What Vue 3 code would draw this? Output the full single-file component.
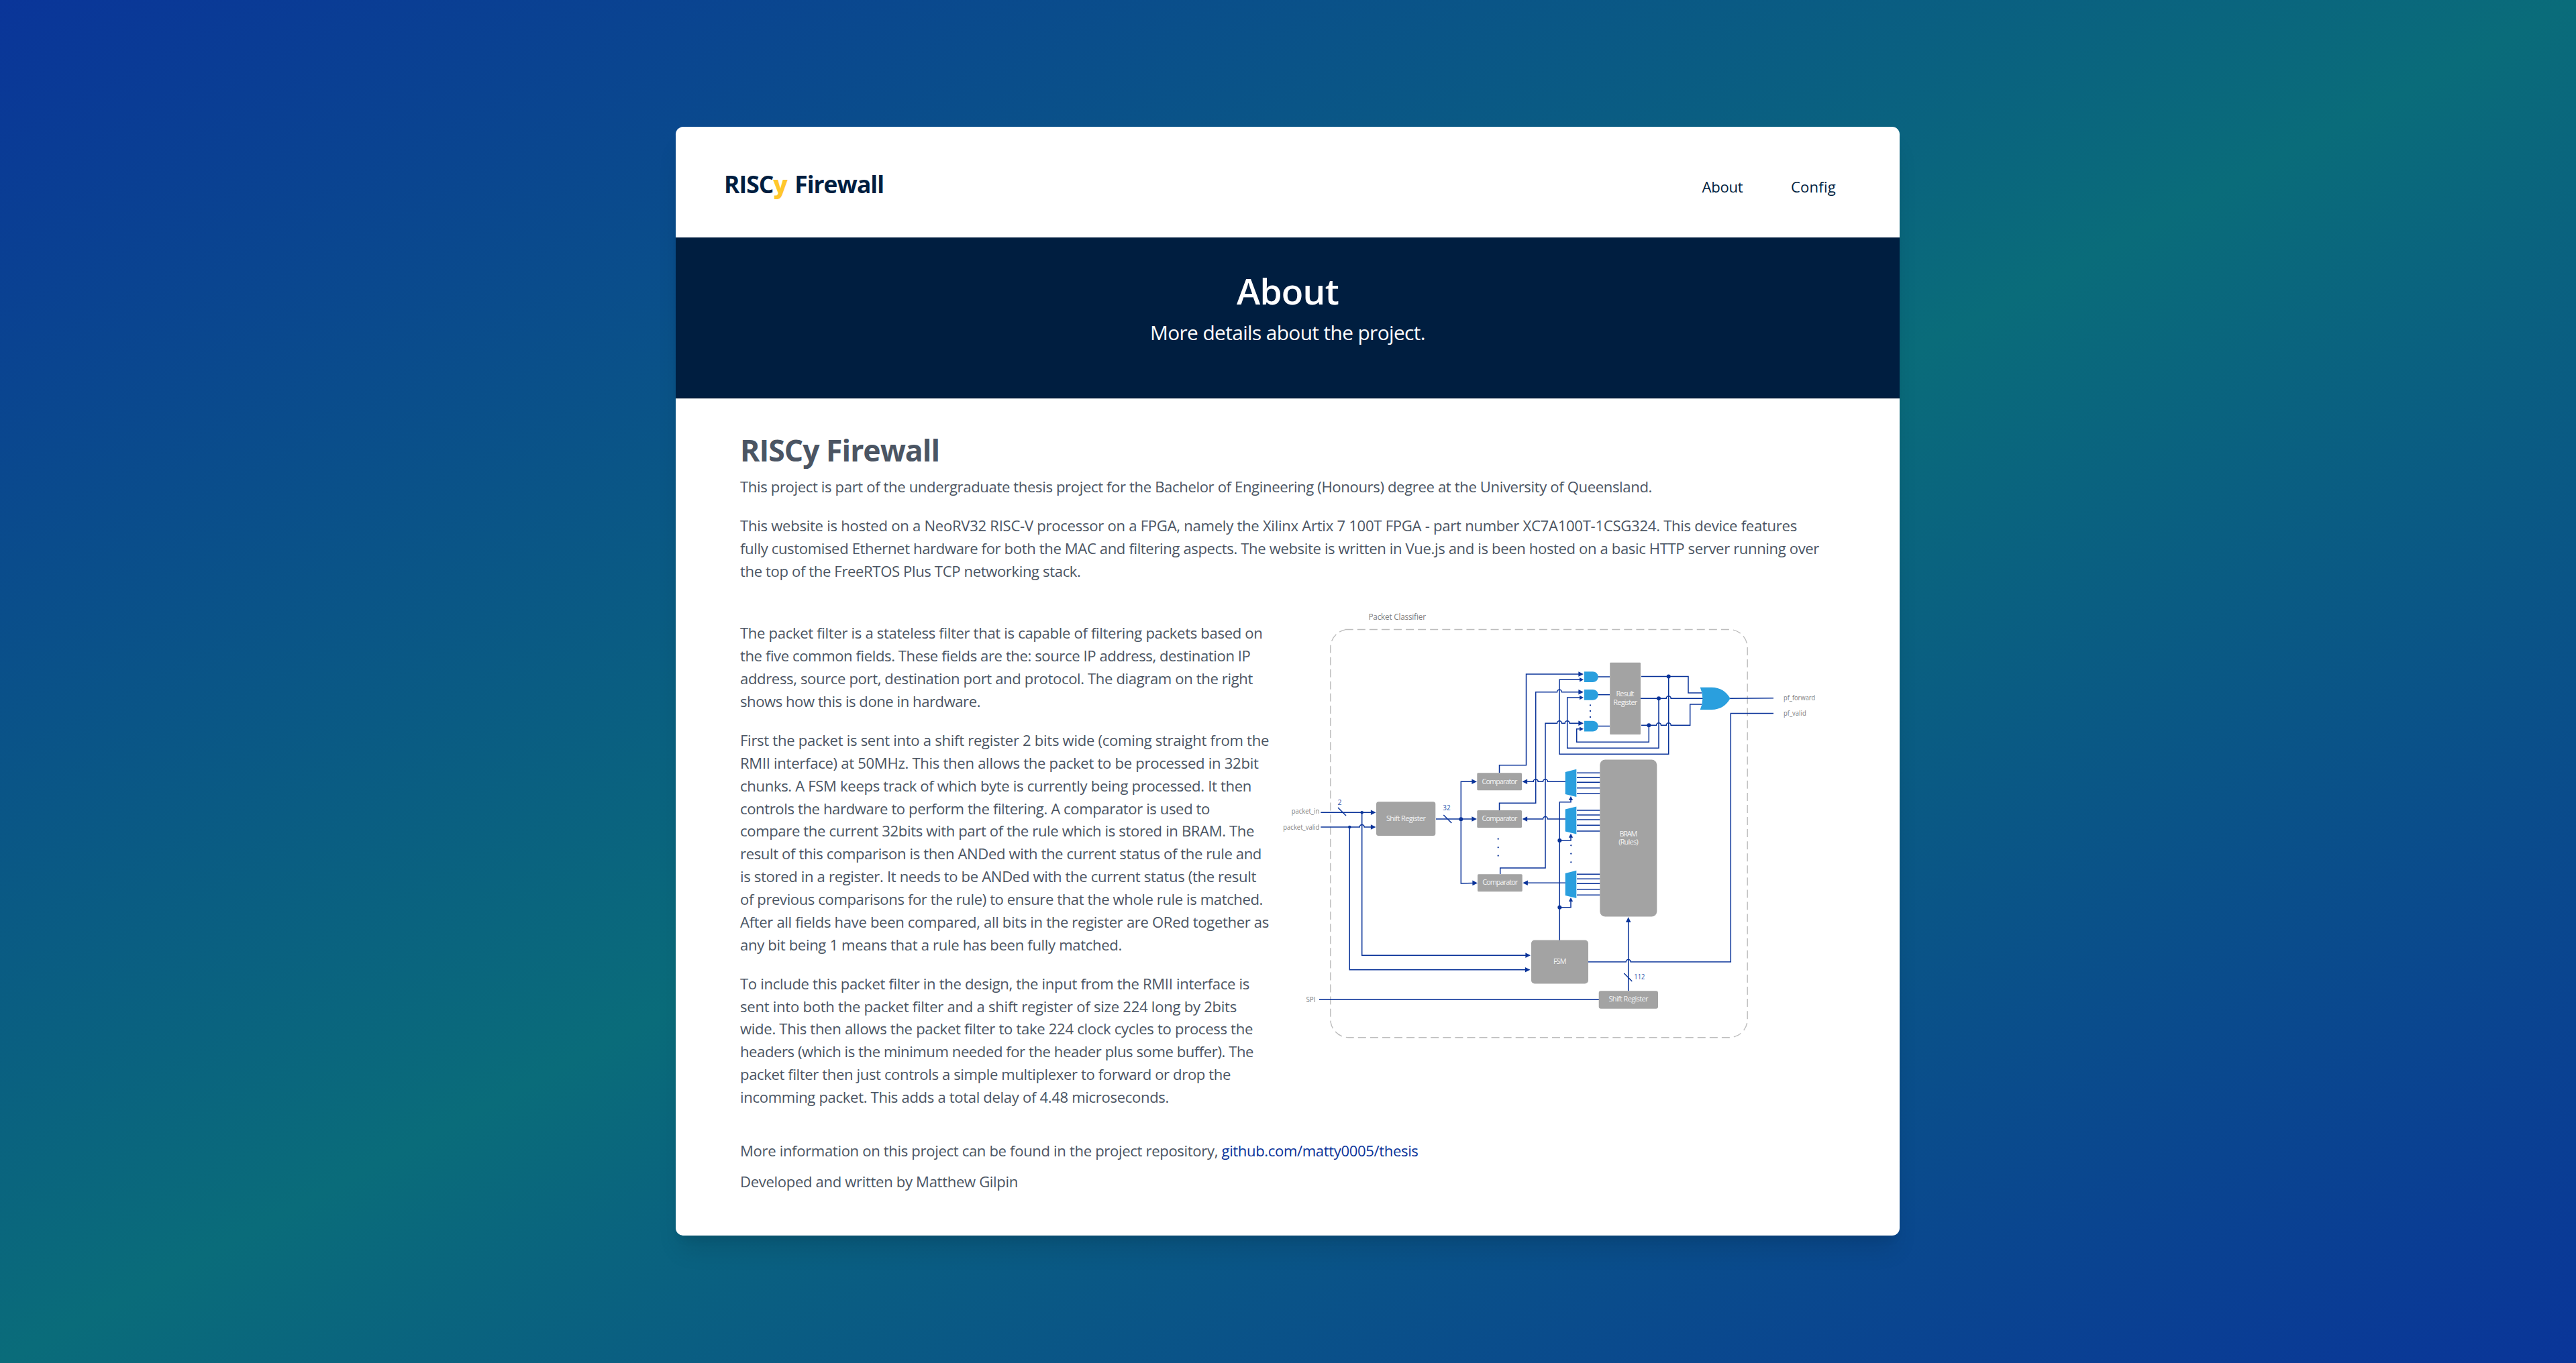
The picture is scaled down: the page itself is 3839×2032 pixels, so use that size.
<script setup>
// Spreads the letters of a line so that it fills the given measure.
const vFit = {
  mounted(el, { value }) {
    const natural = el.getBoundingClientRect().width
    el.style.letterSpacing = `${(value - natural) / el.textContent.length}px`
  },
}

const intro = [
  [['This project is part of the undergraduate thesis project for the Bachelor of Engineering (Honours) degree at the University of Queensland.', 1359]],
  [
    ['This website is hosted on a NeoRV32 RISC-V processor on a FPGA, namely the Xilinx Artix 7 100T FPGA - part number XC7A100T-1CSG324. This device features', 1575],
    ['fully customised Ethernet hardware for both the MAC and filtering aspects. The website is written in Vue.js and is been hosted on a basic HTTP server running over', 1608],
    ['the top of the FreeRTOS Plus TCP networking stack.', 507.5],
  ],
]

const details = [
  [
    ['The packet filter is a stateless filter that is capable of filtering packets based on', 778.5],
    ['the five common fields. These fields are the: source IP address, destination IP', 760.5],
    ['address, source port, destination port and protocol. The diagram on the right', 764],
    ['shows how this is done in hardware.', 358],
  ],
  [
    ['First the packet is sent into a shift register 2 bits wide (coming straight from the', 788],
    ['RMII interface) at 50MHz. This then allows the packet to be processed in 32bit', 772.5],
    ['chunks. A FSM keeps track of which byte is currently being processed. It then', 762],
    ['controls the hardware to perform the filtering. A comparator is used to', 700],
    ['compare the current 32bits with part of the rule which is stored in BRAM. The', 766],
    ['result of this comparison is then ANDed with the current status of the rule and', 777],
    ['is stored in a register. It needs to be ANDed with the current status (the result', 769],
    ['of previous comparisons for the rule) to ensure that the whole rule is matched.', 779],
    ['After all fields have been compared, all bits in the register are ORed together as', 788],
    ['any bit being 1 means that a rule has been fully matched.', 569],
  ],
  [
    ['To include this packet filter in the design, the input from the RMII interface is', 759],
    ['sent into both the packet filter and a shift register of size 224 long by 2bits', 740],
    ['wide. This then allows the packet filter to take 224 clock cycles to process the', 764],
    ['headers (which is the minimum needed for the header plus some buffer). The', 765],
    ['packet filter then just controls a simple multiplexer to forward or drop the', 731],
    ['incomming packet. This adds a total delay of 4.48 microseconds.', 639],
  ],
]

// Semicircular jumps where one wire passes over another.
const hopR = (x) => `H${x - 3.5}a3.5 3.5 0 0 1 7 0`
const hopL = (x) => `H${x + 3.5}a3.5 3.5 0 0 0 -7 0`

const wires = [
  // inputs
  'M1968.3 1211.3H2045',
  `M1968.3 1233${hopR(2029.7)}H2045`,
  'M2029.7 1211.3V1424.3H2275',
  'M2011.3 1233V1445.7H2275',
  'M1966 1490.3H2383',
  'M1994 1204L2006 1216',
  // shift register to comparators
  'M2140 1221H2196',
  'M2151.3 1215L2163.3 1227',
  'M2196 1165.3H2177.3V1317L2196 1316.5',
  // comparators to AND gates
  'M2234.5 1152V1140.7H2274.5V1005H2355',
  `M2234.5 1208V1197.3H2288.7V1031.7${hopR(2324)}H2355`,
  `M2235.7 1303V1294H2303V1078.3${hopR(2324)}${hopR(2335.7)}H2355`,
  // multiplexers to comparators
  `M2333 1165.3${hopL(2303)}${hopL(2288.7)}H2274`,
  `M2333 1221${hopL(2303)}H2274`,
  'M2333 1316.3H2274',
  // multiplexer select
  'M2324.3 1402V1195.7H2341V1191',
  'M2324.3 1253H2341V1247',
  'M2324.3 1352.7H2341V1342',
  // feedback
  'M2486.7 1008.5V1124.3H2324V1013.3H2356',
  'M2472 1041.3V1115.3H2335.7V1040H2356',
  'M2457.3 1081.3V1106.3H2349.7V1086.7H2356',
  // gates and result register
  'M2381 1009H2399',
  'M2381 1035.7H2399',
  'M2381 1082.5H2399',
  'M2446 1008.5H2516V1033H2536',
  `M2445 1041.3${hopR(2486.7)}H2538`,
  `M2446 1081.3${hopR(2472)}${hopR(2486.7)}H2518.7V1050H2536`,
  'M2578 1041.2L2643 1040.7',
  // state machine and rule loading
  `M2643 1063.5H2579.3V1434${hopL(2426.7)}H2367`,
  'M2426.7 1477V1372',
  'M2420.3 1451L2432.3 1463',
]

const arrows = [
  [2050.5, 1211.3, 0], [2050.5, 1233, 0], [2281, 1424.3, 0], [2280.5, 1445.7, 0],
  [2201, 1165.3, 0], [2201, 1221, 0], [2202, 1316.4, 0],
  [2360, 1005, 0], [2360, 1031.7, 0], [2360, 1078.3, 0],
  [2268.5, 1165.3, 180], [2268.5, 1221, 180], [2269.3, 1316.3, 180],
  [2426.7, 1367.3, -90],
]
const smallArrows = [
  [2360, 1013.3, 0], [2360, 1040, 0], [2360, 1086.7, 0],
  [2341, 1187, -90], [2341, 1242.7, -90], [2341, 1338, -90],
]

const nodes = [
  [2029.7, 1211.3, 2.3], [2011.3, 1233, 2.3], [2177.3, 1221.3, 3],
  [2486.7, 1008.5, 3], [2472, 1041.3, 3], [2457.3, 1081.3, 3],
  [2324.3, 1253, 3], [2324.3, 1352.7, 3],
]

const dots = [
  [2370, 1051.3], [2370, 1060], [2370, 1069],
  [2232.7, 1250.7], [2232.7, 1263.3], [2232.7, 1275.7],
  [2341.3, 1260.3], [2341.3, 1272.7], [2341.3, 1285.3],
]

const blocks = [
  [2051, 1195.3, 88.3, 50.7, 3.5],
  [2201.3, 1152.2, 66.7, 26, 1.5],
  [2201.3, 1208, 66.7, 26, 1.5],
  [2202, 1303.2, 66.7, 26, 1.5],
  [2384.3, 1132.5, 85, 234, 8],
  [2282, 1401.5, 85, 65, 5],
  [2382.7, 1477.2, 88.3, 26.5, 3],
  [2399.2, 987.7, 45.8, 107.3, 1],
]

const blockLabels = [
  ['Shift Register', 2095.5, 1224, 59],
  ['Comparator', 2235, 1168.6, 53],
  ['Comparator', 2235, 1224, 53],
  ['Comparator', 2235.7, 1319.2, 53],
  ['BRAM', 2426.9, 1247, 27],
  ['(Rules)', 2426.9, 1258.5, 29.5],
  ['FSM', 2324.7, 1437.2, 19.5],
  ['Shift Register', 2427, 1493.2, 59],
  ['Result', 2422, 1038.4, 27],
  ['Register', 2422.3, 1050.5, 36],
]

const pinLabels = [
  ['packet_in', 1924.7, 1212.8, 41.5],
  ['packet_valid', 1912.3, 1236.8, 54],
  ['SPI', 1946.5, 1493.9, 14],
  ['pf_forward', 2658, 1044.4, 47.3],
  ['pf_valid', 2658, 1066.8, 33.7],
]

const busLabels = [
  ['2', 1993.6, 1200.2, 6],
  ['32', 2150.3, 1207.8, 11.4],
  ['112', 2435.3, 1459.5, 16],
]

const andGates = [1001.3, 1028, 1074.7]
const muxes = [0, 55.6, 151]
const muxLines = [1152.3, 1159.3, 1166.3, 1174.7, 1183.3]
</script>

<template>
  <div class="page">
    <div class="card">
      <header class="topbar">
        <a class="brand"><span v-fit="238">RISC<b>y</b> Firewall</span></a>
        <nav>
          <a v-fit="61">About</a>
          <a v-fit="67">Config</a>
        </nav>
      </header>

      <section class="banner">
        <h1 v-fit="152">About</h1>
        <p v-fit="410">More details about the project.</p>
      </section>

      <main>
        <h2 v-fit="297">RISCy Firewall</h2>
        <div class="stack">
          <p v-for="(p, i) in intro" :key="i">
            <span v-for="[t, w] in p" :key="t" v-fit="w" class="line">{{ t }}</span>
          </p>
        </div>

        <div class="columns">
          <div class="stack">
            <p v-for="(p, i) in details" :key="i">
              <span v-for="[t, w] in p" :key="t" v-fit="w" class="line">{{ t }}</span>
            </p>
          </div>

          <svg class="diagram" viewBox="1903 905 817 655" width="817" height="655">
            <path
              class="boundary"
              d="M2004.7 938.5H2577A27 27 0 0 1 2604.2 965.5V1519.7A27 27 0 0 1 2577 1546.7H2009.8A27 27 0 0 1 1982.8 1519.7V965.5A27 27 0 0 1 2004.7 938.9"
            />
            <text class="title" x="2039.5" y="923.5" textLength="85.5">Packet Classifier</text>

            <g class="wires">
              <path v-for="d in wires" :key="d" :d="d" />
              <template v-for="m in muxes" :key="m">
                <path v-for="y in muxLines" :key="y" :d="`M2350 ${y + m}H2384.5`" />
              </template>
            </g>

            <g class="ink">
              <path
                v-for="[x, y, r] in arrows"
                :key="`${x}-${y}`"
                d="M0 0L-7.6 -3.8V3.8Z"
                :transform="`translate(${x} ${y}) rotate(${r})`"
              />
              <path
                v-for="[x, y, r] in smallArrows"
                :key="`${x}-${y}`"
                d="M0 0L-6 -3.2V3.2Z"
                :transform="`translate(${x} ${y}) rotate(${r})`"
              />
              <circle v-for="[x, y, r] in nodes" :key="`${x}-${y}`" :cx="x" :cy="y" :r="r" />
              <circle v-for="[x, y] in dots" :key="`${x}-${y}`" :cx="x" :cy="y" r="1.15" />
            </g>

            <rect
              v-for="[x, y, w, h, r] in blocks"
              :key="`${x}-${y}`"
              class="block"
              :x="x"
              :y="y"
              :width="w"
              :height="h"
              :rx="r"
            />

            <g class="logic">
              <path v-for="y in andGates" :key="y" :d="`M2361 ${y}H2373.5C2384.5 ${y} 2384.5 ${y + 15.7} 2373.5 ${y + 15.7}H2361Z`" />
              <path v-for="m in muxes" :key="m" d="M2332.7 1151L2349.3 1146.8V1188L2332.7 1184Z" :transform="`translate(0 ${m})`" />
              <path d="M2533.7 1024.7H2551Q2569.5 1025 2578.5 1041.3Q2569.5 1057.8 2551 1058H2533.7Q2541 1041.3 2533.7 1024.7Z" />
            </g>

            <text v-for="[t, x, y, w] in blockLabels" :key="`${x}-${y}`" class="on-block" :x="x - w / 2" :y="y" :textLength="w">{{ t }}</text>
            <text v-for="[t, x, y, w] in pinLabels" :key="t" class="pin" :x="x" :y="y" :textLength="w" lengthAdjust="spacingAndGlyphs">{{ t }}</text>
            <text v-for="[t, x, y, w] in busLabels" :key="t" class="bus" :x="x" :y="y" :textLength="w" lengthAdjust="spacingAndGlyphs">{{ t }}</text>
          </svg>
        </div>

        <footer>
          <p>
            <span v-fit="717.5" class="piece">More information on this project can be found in the project repository, </span><a v-fit="293" class="piece">github.com/matty0005/thesis</a>
          </p>
          <p><span v-fit="414" class="piece">Developed and written by Matthew Gilpin</span></p>
        </footer>
      </main>
    </div>
  </div>
</template>

<style>
body {
  margin: 0;
}
</style>

<style scoped>
.page {
  box-sizing: border-box;
  height: 2032px;
  padding: 189px 1008px 190px 1007px;
  background: linear-gradient(to bottom right, #0a3599, #0a6c7a, #0a3599);
  font-family: "Open Sans", "Noto Sans", sans-serif;
  font-size: 22.1px;
  line-height: 33.87px;
  color: #4b5563;
}

.card {
  display: flex;
  flex-direction: column;
  box-sizing: border-box;
  height: 1653px;
  border-radius: 11.3px;
  background: #fff;
  box-shadow: 0 28px 35px -7px rgba(0, 0, 0, 0.1), 0 11px 14px -8px rgba(0, 0, 0, 0.1);
}

h1,
h2,
p {
  margin: 0;
}

.topbar {
  display: flex;
  justify-content: space-between;
  box-sizing: border-box;
  height: 165px;
  padding: 0 95px 0 72px;
  color: #001e40;
}

.brand {
  padding-top: 60px;
  font-size: 35.4px;
  font-weight: 700;
  line-height: 50px;
  white-space: nowrap;
  word-spacing: 3px;
}

.brand span {
  display: inline-block;
}

.brand b {
  color: #ffc72c;
}

nav {
  display: flex;
  gap: 71.5px;
  padding-top: 73px;
}

.banner {
  display: flex;
  flex-direction: column;
  align-items: center;
  box-sizing: border-box;
  height: 240px;
  padding-top: 50px;
  border-bottom: 2px solid #001a39;
  background: #001e40;
  color: #fff;
}

.banner h1 {
  font-size: 53.2px;
  font-weight: 600;
  line-height: 60px;
  white-space: nowrap;
}

.banner p {
  font-size: 29.8px;
  line-height: 40px;
  margin-top: 12px;
  white-space: nowrap;
}

main {
  display: flex;
  flex-direction: column;
  padding: 47px 96px 0;
}

h2 {
  width: fit-content;
  margin-bottom: 7.9px;
  font-size: 44.6px;
  font-weight: 700;
  line-height: 60px;
  white-space: nowrap;
}

.stack {
  display: flex;
  flex-direction: column;
  gap: 24px;
}

.line {
  display: block;
  width: fit-content;
  white-space: pre;
}

.piece {
  display: inline-block;
  white-space: pre;
}

.columns {
  display: grid;
  grid-template-columns: 800px 817px;
  align-items: start;
  margin-top: 36.3px;
}

.columns .stack {
  padding-top: 22.7px;
}

footer {
  display: flex;
  flex-direction: column;
  gap: 12.2px;
  margin-top: 46.4px;
}

footer a {
  color: #0a3399;
}

.diagram {
  display: block;
  font-size: 10.9px;
}

.boundary {
  fill: none;
  stroke: #bdbdbd;
  stroke-width: 1.4;
  stroke-dasharray: 12 6.07;
}

.wires {
  fill: none;
  stroke: #0a3399;
  stroke-width: 1.5;
}

.ink {
  fill: #0a3399;
}

.block {
  fill: #a3a3a3;
}

.logic {
  fill: #2a9fde;
}

.title {
  font-size: 11.8px;
  fill: #808080;
}

.pin {
  fill: #808080;
}

.bus {
  fill: #2f58ad;
}

.on-block {
  fill: #f4f4f4;
}
</style>
